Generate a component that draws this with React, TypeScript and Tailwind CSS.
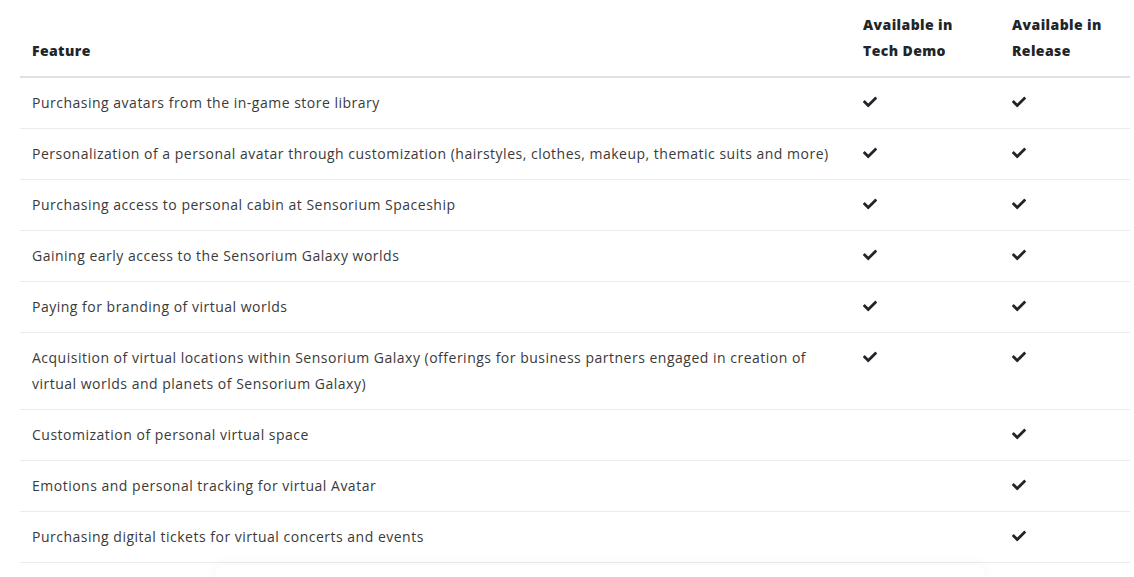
import React from "react";
import { FaCheck } from "react-icons/fa";

const rows: { t: string; demo: boolean; rel: boolean }[] = [
  { t: "Purchasing avatars from the in-game store library", demo: true, rel: true },
  { t: "Personalization of a personal avatar through customization (hairstyles, clothes, makeup, thematic suits and more)", demo: true, rel: true },
  { t: "Purchasing access to personal cabin at Sensorium Spaceship", demo: true, rel: true },
  { t: "Gaining early access to the Sensorium Galaxy worlds", demo: true, rel: true },
  { t: "Paying for branding of virtual worlds", demo: true, rel: true },
  { t: "Acquisition of virtual locations within Sensorium Galaxy (offerings for business partners engaged in creation of virtual worlds and planets of Sensorium Galaxy)", demo: true, rel: true },
  { t: "Customization of personal virtual space", demo: false, rel: true },
  { t: "Emotions and personal tracking for virtual Avatar", demo: false, rel: true },
  { t: "Purchasing digital tickets for virtual concerts and events", demo: false, rel: true },
];

function Check() {
  return <FaCheck className="inline-block w-[14px] h-[14px] text-[#212529] align-[-1px]" />;
}

export default function App() {
  return (
    <div className="w-[1134px] h-[577px] overflow-hidden bg-white font-['Open_Sans',sans-serif]">
      <div className="px-[20px]">
        <table className="w-[1110px] border-collapse table-fixed">
          <colgroup>
            <col className="w-[831px]" />
            <col className="w-[149px]" />
            <col className="w-[130px]" />
          </colgroup>
          <thead>
            <tr className="border-b-2 border-[#dee2e6]">
              <th className="px-3 py-3 text-left align-bottom text-[14px] leading-[26px] font-extrabold text-[#212529] tracking-[0.4px]">Feature</th>
              <th className="px-3 py-3 text-left align-bottom text-[14px] leading-[26px] font-extrabold text-[#212529] tracking-[0.4px]">Available in<br />Tech Demo</th>
              <th className="px-3 py-3 text-left align-bottom text-[14px] leading-[26px] font-extrabold text-[#212529] tracking-[0.4px]">Available in<br />Release</th>
            </tr>
          </thead>
          <tbody>
            {rows.map((r, i) => (
              <tr key={i} className="border-b border-[#ebebeb]">
                <td className="px-3 pt-3 pb-3 align-top text-[14px] leading-[26px] text-[#3a3a3a] tracking-[0.5px]">{r.t}</td>
                <td className="px-3 pt-3 pb-3 align-top text-[14px] leading-[26px]">{r.demo ? <Check /> : null}</td>
                <td className="px-3 pt-3 pb-3 align-top text-[14px] leading-[26px]">{r.rel ? <Check /> : null}</td>
              </tr>
            ))}
          </tbody>
        </table>
      </div>
      <div className="ml-[215px] mt-[2px] w-[770px] h-[40px] rounded-[10px] bg-white shadow-[0_-2px_14px_rgba(0,0,0,0.035)]" />
    </div>
  );
}
